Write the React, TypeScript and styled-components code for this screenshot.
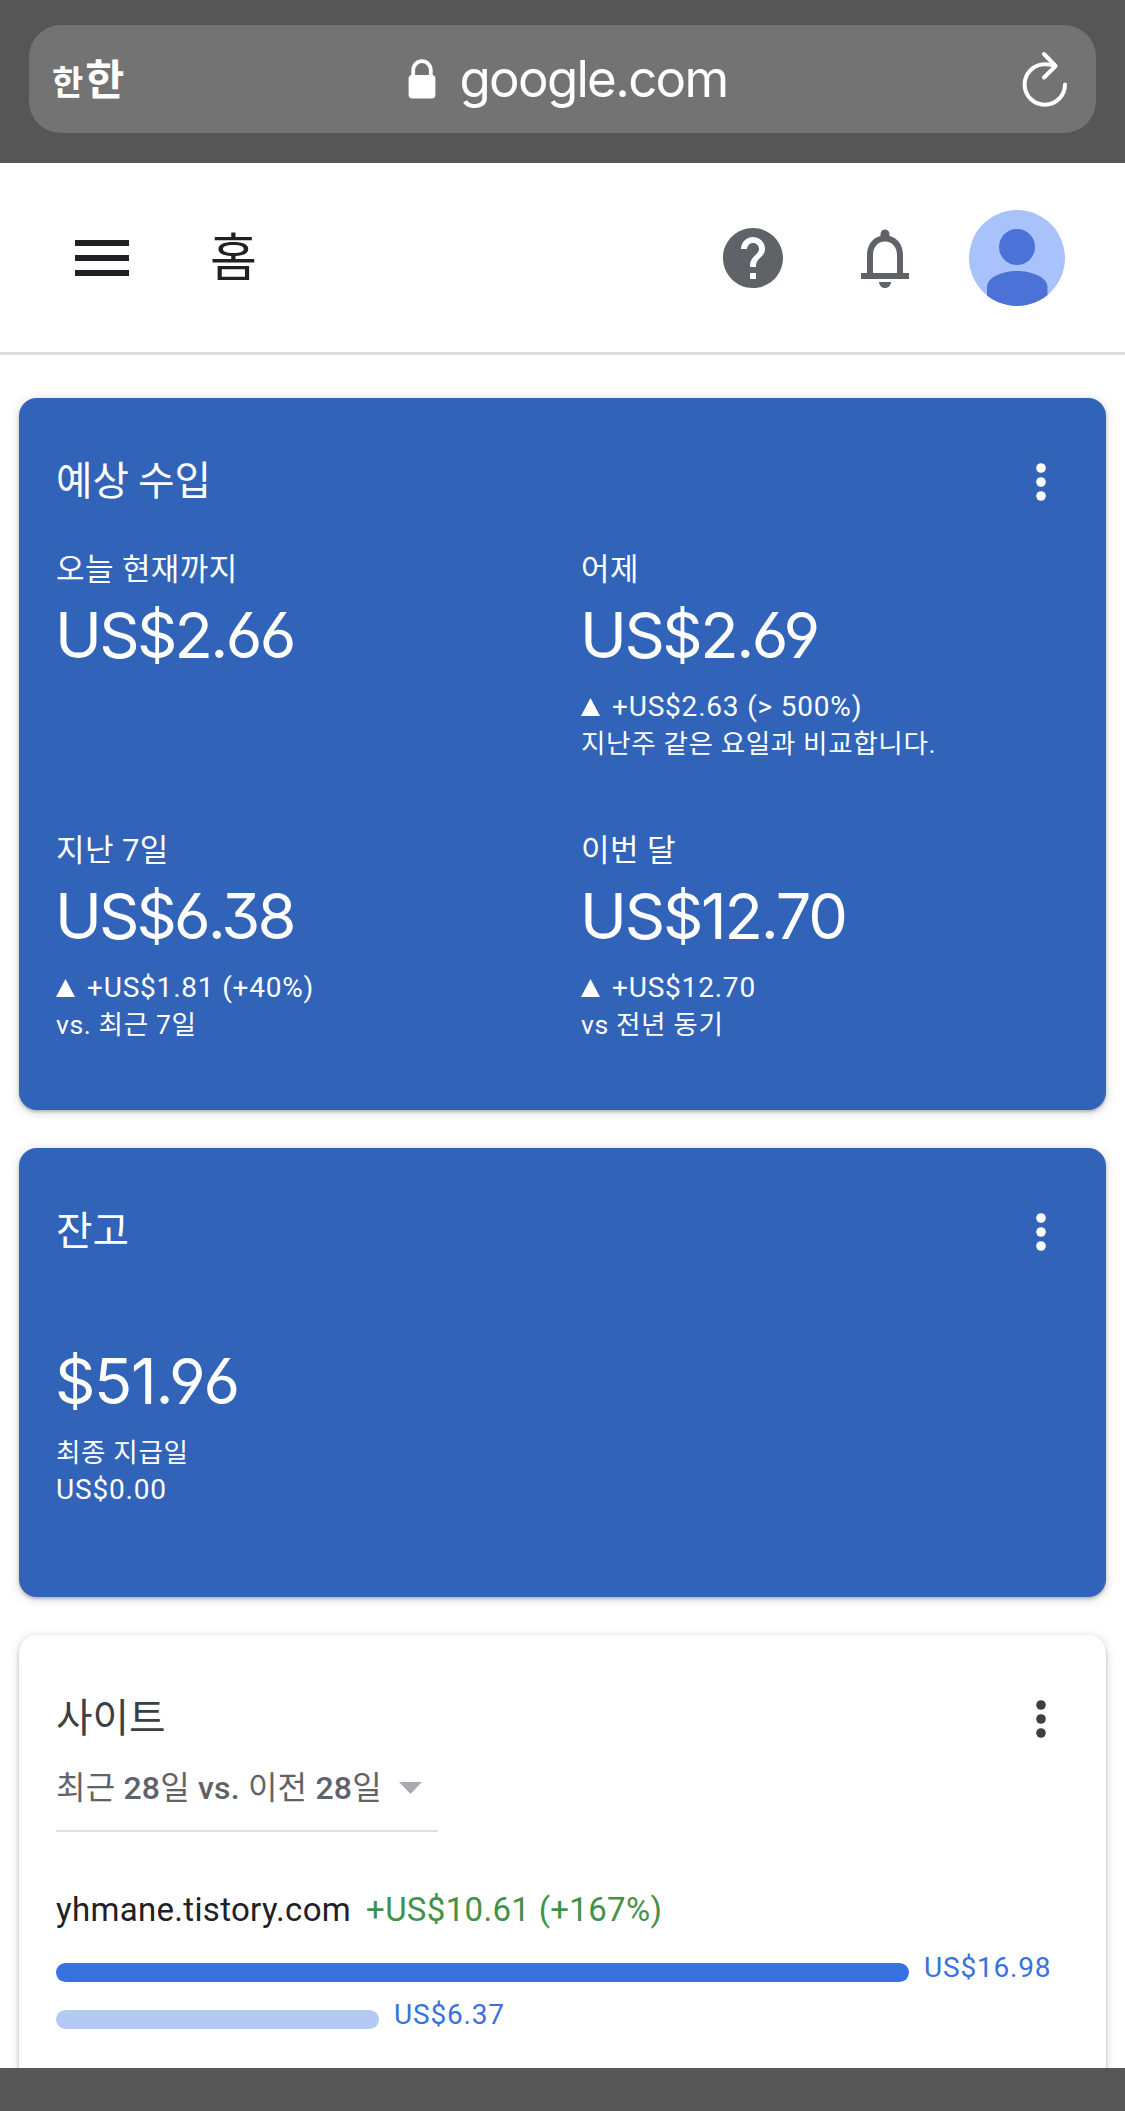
import React from "react";
import styled, { createGlobalStyle } from "styled-components";

const KR = `"Noto Sans CJK KR", sans-serif`;

const GlobalStyle = createGlobalStyle`
  *, *::before, *::after { box-sizing: border-box; }
  html, body { margin: 0; padding: 0; background: #fff; }
  body { font-family: Roboto, ${KR}; }
`;

const Screen = styled.div`
  display: flex;
  flex-direction: column;
  width: 1125px;
  height: 2111px;
  overflow: hidden;
  background: #fff;
`;

const BrowserBar = styled.div`
  flex: none;
  height: 163px;
  padding: 25px 29px 30px;
  background: #565656;
`;

const AddressField = styled.div`
  display: grid;
  grid-template-columns: 1fr auto 1fr;
  align-items: center;
  height: 108px;
  padding: 0 28px 0 23px;
  border-radius: 32px;
  background: #737373;
  color: #fff;
`;

const TextSize = styled.div`
  display: flex;
  align-items: baseline;
  gap: 2px;
  font-family: ${KR};
  font-weight: 700;
  line-height: 60px;
`;

const SizeGlyph = styled.span<{ $size: number }>`
  font-size: ${(p) => p.$size}px;
`;

const Address = styled.div`
  display: flex;
  align-items: center;
  gap: 24px;
  margin-left: 15px;
`;

const Domain = styled.span`
  font-family: Inter, sans-serif;
  font-size: 51px;
  line-height: 60px;
  letter-spacing: -1.7px;
`;

const ReloadSlot = styled.div`
  display: flex;
  justify-content: flex-end;
`;

const AppBar = styled.header`
  flex: none;
  display: flex;
  align-items: center;
  height: 192px;
  padding: 0 60px 0 75px;
  border-bottom: 3px solid #dadce0;
`;

const Burger = styled.div`
  display: flex;
  flex-direction: column;
  gap: 9px;
  width: 54px;
`;

const BurgerLine = styled.span`
  height: 6px;
  background: #202124;
`;

const PageTitle = styled.h1`
  flex: 1;
  margin: 0 0 0 81px;
  padding-bottom: 8px;
  font-family: ${KR};
  font-size: 51px;
  font-weight: 400;
  line-height: 66px;
  color: #202124;
`;

const Actions = styled.div`
  display: flex;
  align-items: center;
`;

const ActionIcon = styled.svg`
  display: block;
  width: 72px;
  height: 72px;
  margin-right: 60px;
  fill: #5f6368;
  &:nth-child(2) { margin-right: 48px; }
`;

const Avatar = styled.svg`
  display: block;
  width: 96px;
  height: 96px;
`;

const Content = styled.main`
  flex: 1;
  min-height: 0;
  display: flex;
  flex-direction: column;
  gap: 38px;
  padding: 43px 19px 0;
  overflow: hidden;
`;

const Card = styled.section<{ $height: number; $plain?: boolean }>`
  flex: none;
  height: ${(p) => p.$height}px;
  padding: 0 37px;
  border-radius: 18px;
  background: ${(p) => (p.$plain ? "#fff" : "#3163b9")};
  color: ${(p) => (p.$plain ? "#3c4043" : "#fff")};
  box-shadow: 0 2px 3px rgba(60, 64, 67, 0.3), 0 2px 8px 2px rgba(60, 64, 67, 0.15);
`;

const CardHeader = styled.div`
  display: flex;
  align-items: center;
  justify-content: space-between;
  padding: 54px 22.5px 0 0;
`;

const CardTitle = styled.h2`
  margin: 0;
  padding-bottom: 8px;
  font-family: ${KR};
  font-size: 39.7px;
  font-weight: 400;
  line-height: 52px;
`;

const Dots = styled.svg`
  display: block;
  width: 12px;
  height: 40px;
  fill: currentColor;
`;

const MetricGrid = styled.div`
  display: grid;
  grid-template-columns: 525px 1fr;
  grid-auto-rows: 281px;
  padding-top: 38px;
`;

const Metric = styled.div`
  display: flex;
  flex-direction: column;
`;

const MetricLabel = styled.div`
  font-size: 31px;
  line-height: 40px;
  letter-spacing: 0.4px;
`;

const MetricValue = styled.div<{ $tracking: number }>`
  margin: 5px 0 0 -1px;
  font-family: Inter, sans-serif;
  font-feature-settings: "cv03", "cv04", "ss01";
  font-size: 63px;
  line-height: 80px;
  letter-spacing: ${(p) => p.$tracking}px;
`;

const Note = styled.div<{ $latin?: boolean }>`
  display: flex;
  align-items: center;
  font-size: ${(p) => (p.$latin ? 28 : 26.6)}px;
  line-height: 38px;
  letter-spacing: ${(p) => (p.$latin ? 0.8 : 0.6)}px;
`;

const Delta = styled(Note)`
  margin: 13px 0 -1px;
  gap: 12px;
`;

const Triangle = styled.svg`
  display: block;
  width: 19px;
  height: 18px;
  fill: currentColor;
`;

const BalanceBody = styled.div`
  padding-top: 74px;
`;

const RangeSelect = styled.div`
  display: flex;
  align-items: center;
  gap: 17px;
  width: 382px;
  height: 82px;
  margin-top: 1px;
  padding-bottom: 4px;
  border-bottom: 2px solid #dedede;
  color: #5f6368;
  font-size: 32px;
  line-height: 44px;
  letter-spacing: 0.2px;
  white-space: nowrap;
`;

const Medium = styled.span`
  font-weight: 500;
`;

const Caret = styled.svg`
  display: block;
  width: 23px;
  height: 12px;
  fill: #a9abae;
`;

const SiteLine = styled.div`
  display: flex;
  gap: 15px;
  padding: 56px 0 1px;
  font-size: 33px;
  line-height: 44px;
  letter-spacing: 0.32px;
  white-space: nowrap;
`;

const SiteName = styled.span`
  color: #202124;
`;

const SiteChange = styled.span`
  color: #439149;
`;

const BarList = styled.div`
  display: flex;
  flex-direction: column;
  gap: 9px;
  padding-top: 20px;
`;

const BarRow = styled.div`
  display: flex;
  align-items: center;
  height: 38px;
  gap: 15px;
`;

const Bar = styled.div<{ $color: string }>`
  height: 19px;
  border-radius: 9.5px;
  background: ${(p) => p.$color};
`;

const BarLabel = styled.span`
  padding-bottom: 9px;
  font-size: 28px;
  line-height: 38px;
  letter-spacing: 0.8px;
  color: #3871e0;
`;

const BottomBar = styled.div`
  flex: none;
  height: 43px;
  background: #565656;
`;

const MoreDots = () => (
  <Dots viewBox="0 0 12 40">
    <circle cx="6" cy="6" r="4.8" />
    <circle cx="6" cy="20" r="4.8" />
    <circle cx="6" cy="34" r="4.8" />
  </Dots>
);

type MetricData = { label: string; value: string; tracking: number; delta?: string; note?: string };

const metrics: MetricData[] = [
  { label: "오늘 현재까지", value: "US$2.66", tracking: -2.7 },
  { label: "어제", value: "US$2.69", tracking: -2.5, delta: "+US$2.63 (> 500%)", note: "지난주 같은 요일과 비교합니다." },
  { label: "지난 7일", value: "US$6.38", tracking: -2.9, delta: "+US$1.81 (+40%)", note: "vs. 최근 7일" },
  { label: "이번 달", value: "US$12.70", tracking: -2.2, delta: "+US$12.70", note: "vs 전년 동기" },
];

const bars = [
  { amount: "US$16.98", width: 853, color: "#3871e0" },
  { amount: "US$6.37", width: 323, color: "#b3caf5" },
];

export default function App() {
  return (
    <>
      <GlobalStyle />
      <Screen>
        <BrowserBar>
          <AddressField>
            <TextSize>
              <SizeGlyph $size={34}>한</SizeGlyph>
              <SizeGlyph $size={42.5}>한</SizeGlyph>
            </TextSize>
            <Address>
              <svg width="28" height="40" viewBox="0 0 28 40">
                <path d="M5.2 18V11.5a8.8 9.3 0 0 1 17.6 0V18" fill="none" stroke="#fff" strokeWidth="3.8" />
                <rect x="0.6" y="16" width="26.8" height="23.4" rx="3.6" fill="#fff" />
              </svg>
              <Domain>google.com</Domain>
            </Address>
            <ReloadSlot>
              <svg width="46" height="56" viewBox="0 0 46 56" fill="none" stroke="#fff" strokeWidth="4" strokeLinecap="round" strokeLinejoin="round">
                <path d="M43 33.5A20.2 20.2 0 1 1 22.8 13.3c3.600 0 6.500.6 9.800 1.500" />
                <path d="M22 3l11.600 12L22 26.500" />
              </svg>
            </ReloadSlot>
          </AddressField>
        </BrowserBar>

        <AppBar>
          <Burger>
            <BurgerLine />
            <BurgerLine />
            <BurgerLine />
          </Burger>
          <PageTitle>홈</PageTitle>
          <Actions>
            <ActionIcon viewBox="0 0 24 24">
              <path d="M12 2C6.480 2 2 6.480 2 12s4.480 10 10 10 10-4.480 10-10S17.520 2 12 2zm1 17h-2v-2h2v2zm2.070-7.750l-.9.920C13.450 12.900 13 13.500 13 15h-2v-.5c0-1.100.45-2.100 1.170-2.830l1.240-1.260c.37-.36.590-.86.590-1.410 0-1.100-.9-2-2-2s-2 .9-2 2H8c0-2.210 1.790-4 4-4s4 1.790 4 4c0 .88-.36 1.680-.93 2.250z" />
            </ActionIcon>
            <ActionIcon viewBox="0 0 24 24">
              <path d="M18 17v-6c0-3.070-1.630-5.640-4.500-6.320V4c0-.83-.67-1.500-1.500-1.500s-1.500.67-1.500 1.500v.68C7.640 5.360 6 7.920 6 11v6H4v2h16v-2h-2zm-2 0H8v-6c0-2.480 1.510-4.500 4-4.500s4 2.020 4 4.500v6zm-4 5c1.100 0 2-.9 2-2h-4c0 1.100.9 2 2 2z" />
            </ActionIcon>
            <Avatar viewBox="0 0 96 96">
              <clipPath id="avatarClip">
                <circle cx="48" cy="48" r="48" />
              </clipPath>
              <g clipPath="url(#avatarClip)">
                <rect width="96" height="96" fill="#a8c2fb" />
                <circle cx="48" cy="37" r="18" fill="#4c72d8" />
                <path d="M18 96V77c0-10 16-16 30-16s30.500 6 30.500 16v19z" fill="#4c72d8" />
              </g>
            </Avatar>
          </Actions>
        </AppBar>

        <Content>
          <Card $height={712}>
            <CardHeader>
              <CardTitle>예상 수입</CardTitle>
              <MoreDots />
            </CardHeader>
            <MetricGrid>
              {metrics.map((m) => (
                <Metric key={m.label}>
                  <MetricLabel>{m.label}</MetricLabel>
                  <MetricValue $tracking={m.tracking}>{m.value}</MetricValue>
                  {m.delta && (
                    <Delta $latin>
                      <Triangle viewBox="0 0 19 18">
                        <path d="M9.500 0L19 18H0z" />
                      </Triangle>
                      {m.delta}
                    </Delta>
                  )}
                  {m.note && <Note>{m.note}</Note>}
                </Metric>
              ))}
            </MetricGrid>
          </Card>

          <Card $height={449}>
            <CardHeader>
              <CardTitle>잔고</CardTitle>
              <MoreDots />
            </CardHeader>
            <BalanceBody>
              <MetricValue $tracking={-1.3}>$51.96</MetricValue>
              <Delta>최종 지급일</Delta>
              <Note $latin>US$0.00</Note>
            </BalanceBody>
          </Card>

          <Card $height={520} $plain>
            <CardHeader>
              <CardTitle>사이트</CardTitle>
              <MoreDots />
            </CardHeader>
            <RangeSelect>
              <span>
                최근 <Medium>28</Medium>일 <Medium>vs.</Medium> 이전 <Medium>28</Medium>일
              </span>
              <Caret viewBox="0 0 23 12">
                <path d="M0 0h23L11.500 12z" />
              </Caret>
            </RangeSelect>
            <SiteLine>
              <SiteName>yhmane.tistory.com</SiteName>
              <SiteChange>+US$10.61 (+167%)</SiteChange>
            </SiteLine>
            <BarList>
              {bars.map((b) => (
                <BarRow key={b.amount}>
                  <Bar $color={b.color} style={{ width: b.width }} />
                  <BarLabel>{b.amount}</BarLabel>
                </BarRow>
              ))}
            </BarList>
          </Card>
        </Content>
        <BottomBar />
      </Screen>
    </>
  );
}
